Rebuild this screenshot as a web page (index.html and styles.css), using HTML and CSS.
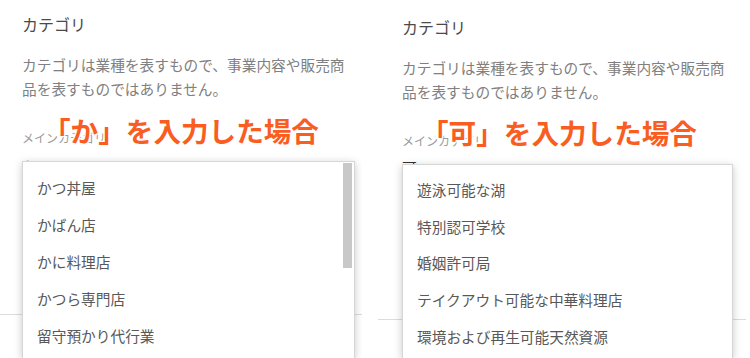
FILE: index.html
```html
<!DOCTYPE html>
<html lang="ja">
<head>
<meta charset="utf-8">
<title>カテゴリ</title>
<link rel="stylesheet" href="styles.css">
</head>
<body>
<div class="page">
  <section class="panel panel-left">
    <h2 class="title">カテゴリ</h2>
    <p class="desc">カテゴリは業種を表すもので、事業内容や販売商品を表すものではありません。</p>
    <div class="field">
      <div class="label">メインカテゴリ</div>
      <div class="input input-light">か</div>
    </div>
    <hr class="divider">
    <div class="caption">「か」を入力した場合</div>
    <div class="menu">
      <ul class="menu-list">
        <li class="menu-item">かつ丼屋</li>
        <li class="menu-item">かばん店</li>
        <li class="menu-item">かに料理店</li>
        <li class="menu-item">かつら専門店</li>
        <li class="menu-item">留守預かり代行業</li>
      </ul>
      <div class="thumb"></div>
    </div>
  </section>
  <section class="panel panel-right">
    <h2 class="title">カテゴリ</h2>
    <p class="desc">カテゴリは業種を表すもので、事業内容や販売商品を表すものではありません。</p>
    <div class="field">
      <div class="label">メインカテゴリ</div>
      <div class="input">可</div>
    </div>
    <hr class="divider">
    <div class="caption">「可」を入力した場合</div>
    <div class="menu">
      <ul class="menu-list">
        <li class="menu-item">遊泳可能な湖</li>
        <li class="menu-item">特別認可学校</li>
        <li class="menu-item">婚姻許可局</li>
        <li class="menu-item">テイクアウト可能な中華料理店</li>
        <li class="menu-item">環境および再生可能天然資源</li>
      </ul>
    </div>
  </section>
</div>
</body>
</html>
```
FILE: styles.css
```css
html, body {
  margin: 0;
  padding: 0;
  background: #fff;
}
body {
  width: 750px;
  height: 358px;
  overflow: hidden;
  font-family: "Noto Sans CJK JP", "Noto Sans", sans-serif;
}
.page {
  display: flex;
  gap: 16px;
  height: 358px;
  overflow: hidden;
}
.panel {
  position: relative;
  box-sizing: border-box;
  height: 358px;
  overflow: hidden;
}
.panel-left {
  width: 362px;
  padding: 12px 0 0 22px;
}
.panel-right {
  width: 368px;
  padding: 15px 0 0 24px;
}
.title {
  margin: 0;
  font-size: 16px;
  line-height: 24px;
  font-weight: 400;
  color: #4a4a4a;
}
.desc {
  margin: 17px 0 0;
  width: 335px;
  font-size: 14.7px;
  line-height: 23.5px;
  color: #808080;
}
.field {
  margin-top: 30px;
}
.label {
  font-size: 12px;
  line-height: 16px;
  color: #9a9a9a;
}
.input {
  margin-top: 9px;
  font-size: 14.7px;
  line-height: 20px;
  color: #333;
}
.input-light {
  margin-top: 10px;
  color: #c4c4c4;
}
.divider {
  border: 0;
  border-top: 1px solid #dcdcdc;
  margin: 138px 0 0 -22px;
  height: 0;
}
.panel-right .divider {
  margin: 141px 0 0 -24px;
}
.caption {
  position: absolute;
  left: 43px;
  top: 115.5px;
  font-size: 27.6px;
  line-height: 28px;
  font-weight: 700;
  color: #fa5d22;
  white-space: nowrap;
  text-shadow: 0 0 2px #fff, 0 0 2px #fff, 1px 1px 1px #fff, -1px -1px 1px #fff, 1px -1px 1px #fff, -1px 1px 1px #fff;
}
.panel-right .caption {
  left: 43px;
  top: 117.5px;
}
.menu {
  position: absolute;
  left: 22px;
  top: 161px;
  width: 333px;
  height: 197px;
  box-sizing: border-box;
  background: #fff;
  border: 1px solid #d6d6d6;
  border-bottom: 0;
  box-shadow: 0 2px 8px rgba(0, 0, 0, 0.22);
}
.panel-right .menu {
  left: 24px;
  top: 164px;
  width: 331px;
  height: 194px;
}
.menu-list {
  list-style: none;
  margin: 0;
  padding: 7px 0 0;
}
.menu-item {
  height: 37px;
  line-height: 37px;
  padding-left: 14px;
  font-size: 14.7px;
  color: #585858;
  white-space: nowrap;
}
.panel-right .menu-item {
  height: 36.7px;
  line-height: 36.7px;
}
.thumb {
  position: absolute;
  right: 2px;
  top: 1px;
  width: 9px;
  height: 105px;
  background: #c8c8c8;
}
```
